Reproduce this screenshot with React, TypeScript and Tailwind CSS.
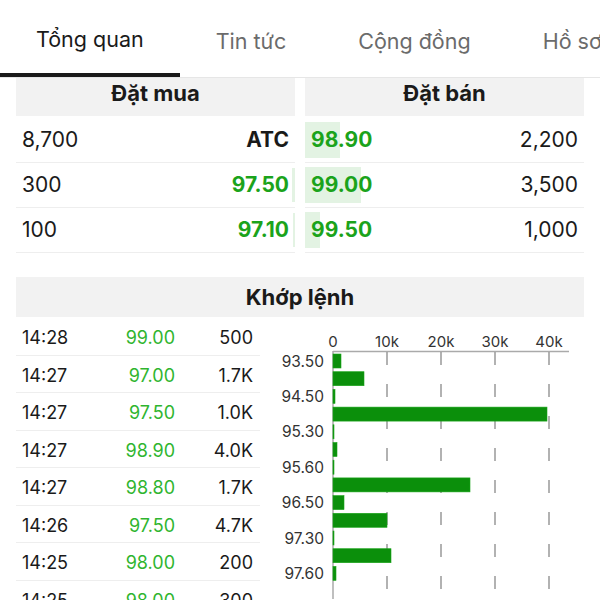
const tabs = ["Tổng quan", "Tin tức", "Cộng đồng", "Hồ sơ"];

const buys = [
  { vol: "8,700", price: "ATC", bar: 0 },
  { vol: "300", price: "97.50", bar: 3 },
  { vol: "100", price: "97.10", bar: 2 },
];

const sells = [
  { price: "98.90", vol: "2,200", bar: 35 },
  { price: "99.00", vol: "3,500", bar: 56 },
  { price: "99.50", vol: "1,000", bar: 15 },
];

const trades = [
  ["14:28", "99.00", "500"],
  ["14:27", "97.00", "1.7K"],
  ["14:27", "97.50", "1.0K"],
  ["14:27", "98.90", "4.0K"],
  ["14:27", "98.80", "1.7K"],
  ["14:26", "97.50", "4.7K"],
  ["14:25", "98.00", "200"],
  ["14:25", "98.00", "300"],
];

// volume per price step, in px at 54px per 10k
const bars = [8, 31, 2, 214, 1, 4, 1, 137, 11, 54, 1, 58, 3];
const labels = ["93.50", "94.50", "95.30", "95.60", "96.50", "97.30", "97.60"];

const Chart = () => {
  const ticks = [
    { x: 333, t: "0" },
    { x: 387, t: "10k" },
    { x: 441, t: "20k" },
    { x: 495, t: "30k" },
    { x: 549, t: "40k" },
  ];
  return (
    <svg width={340} height={282} viewBox="260 318 340 282" className="block">
      {ticks.map((tk) => (
        <text key={tk.t} x={tk.x} y={348} textAnchor="middle" fontSize={15} fill="#333" fontFamily="Inter, sans-serif">
          {tk.t}
        </text>
      ))}
      <line x1={333} y1={352.5} x2={569} y2={352.5} stroke="#aaa" strokeWidth={1.5} />
      <line x1={333} y1={352} x2={333} y2={600} stroke="#aaa" strokeWidth={1.5} />
      {ticks.slice(1).map((tk) => (
        <line key={tk.x} x1={tk.x} y1={353} x2={tk.x} y2={600} stroke="#999" strokeWidth={1.5} strokeDasharray="13 19" />
      ))}
      {bars.map((w, i) => {
        const top = 355 + i * 17.7;
        return (
          <rect key={i} x={333} y={top} width={w} height={14} fill="#0b8f0b" stroke="#1aa51a" strokeWidth={0.6} />
        );
      })}
      {labels.map((l, i) => (
        <text key={l} x={324} y={355 + i * 2 * 17.7 + 12.5} textAnchor="end" fontSize={15.5} fill="#333" fontFamily="Inter, sans-serif">
          {l}
        </text>
      ))}
    </svg>
  );
};

export default function App() {
  return (
    <div className="w-[600px] h-[600px] overflow-hidden bg-white text-[#1a1a1a] font-['Inter',sans-serif]">
      <div className="flex h-[78px] border-b border-[#e6e6e6] whitespace-nowrap">
        {tabs.map((t, i) => (
          <div
            key={t}
            className={
              i === 0
                ? "px-9 flex items-center text-[21.5px] text-[#1a1a1a] border-b-4 border-[#1a1a1a] pt-1.5"
                : "px-9 flex items-center text-[21.5px] text-[#6b6b6b] pt-1.5"
            }
          >
            {t}
          </div>
        ))}
      </div>

      <div className="grid grid-cols-2 gap-[10px] px-4">
        <div>
          <div className="h-[38px] bg-[#f2f2f2] flex items-center justify-center text-[22px] font-bold mb-[2px] pb-[8px]">Đặt mua</div>
          {buys.map((r) => (
            <div key={r.vol} className="relative h-[45px] border-b border-[#eeeeee] flex items-center justify-between px-1.5 text-[21px]">
              {r.bar > 0 && <div className="absolute right-0 top-[5px] bottom-[5px] bg-[#e3f3e3]" style={{ width: r.bar }} />}
              <span className="relative">{r.vol}</span>
              <span className={r.price === "ATC" ? "relative font-bold" : "relative font-bold text-[#1ba31b]"}>{r.price}</span>
            </div>
          ))}
        </div>
        <div>
          <div className="h-[38px] bg-[#f2f2f2] flex items-center justify-center text-[22px] font-bold mb-[2px] pb-[8px]">Đặt bán</div>
          {sells.map((r) => (
            <div key={r.vol} className="relative h-[45px] border-b border-[#eeeeee] flex items-center justify-between px-1.5 text-[21px]">
              <div className="absolute left-0 top-[4px] bottom-[4px] bg-[#e3f3e3]" style={{ width: r.bar }} />
              <span className="relative font-bold text-[#1ba31b]">{r.price}</span>
              <span className="relative">{r.vol}</span>
            </div>
          ))}
        </div>
      </div>

      <div className="px-4 mt-[24px]">
        <div className="h-[40px] bg-[#f2f2f2] flex items-center justify-center text-[22px] font-bold">Khớp lệnh</div>
      </div>

      <div className="flex">
        <div className="w-[260px] pl-4 shrink-0 pt-[1px]">
          {trades.map((r, i) => (
            <div key={i} className="h-[37.5px] border-b border-[#eeeeee] flex items-center text-[18px] pt-[3px]">
              <span className="w-[80px] pl-1.5">{r[0]}</span>
              <span className="w-[79px] text-right text-[#2fb52f]">{r[1]}</span>
              <span className="w-[78px] text-right">{r[2]}</span>
            </div>
          ))}
        </div>
        <Chart />
      </div>
    </div>
  );
}
